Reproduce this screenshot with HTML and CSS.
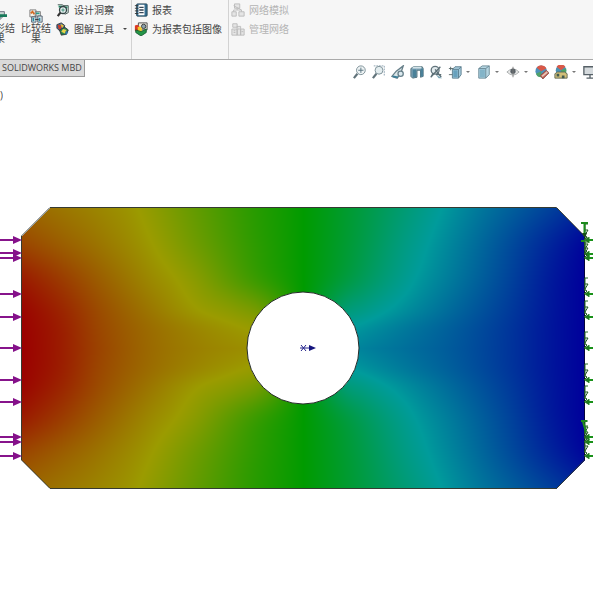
FILE: index.html
```html
<!DOCTYPE html>
<html lang="zh-CN">
<head>
<meta charset="utf-8">
<meta name="viewport" content="width=device-width, initial-scale=1">
<title>SOLIDWORKS Simulation</title>
<link rel="stylesheet" href="styles.css">
</head>
<body>
<header class="ribbon">
  <div class="group group-large">
    <button class="large" type="button">
      <svg class="icon" viewBox="0 0 16 16"><path d="M3 3h10v4l-5 5-5-5z" fill="#c8d6d2" stroke="#667"/><path d="M6 6h10v3H9l-2 3z" fill="#17795a"/></svg>
      <span>变形结果</span>
    </button>
    <button class="large" type="button">
      <svg class="icon" viewBox="0 0 16 16"><path d="M1 1h7v8H1zM7 3h6v5H7z" fill="#f2f0e8" stroke="#777"/><path d="M2 5l2-2 2 3" fill="none" stroke="#d56b24" stroke-width="2"/><path d="M8 5h4" stroke="#299b8c" stroke-width="2"/><path d="M3 9h5v6H3zM10 8h5v7h-5z" fill="#e6edf0" stroke="#456"/><path d="M5 10v4M12 10v4" stroke="#2a8ba2" stroke-width="2"/><path d="M7 12h4" stroke="#333"/></svg>
      <span>比较结果</span>
    </button>
  </div>
  <div class="group group-tools">
    <button class="command" type="button">
      <svg class="icon" viewBox="0 0 16 16"><path d="M2 2h5l2 1h5v8l-4 2" fill="#dbe9e5" stroke="#40534f"/><path d="M3 4h4M10 5h3" stroke="#238766" stroke-width="2"/><circle cx="8" cy="8" r="4" fill="#e6f1f1" stroke="#344" stroke-width="1.5"/><path d="M5 11l-3 4" stroke="#333" stroke-width="2.5"/><path d="M6 8h4M8 6v4" stroke="#388c73"/></svg>
      <span>设计洞察</span>
    </button>
    <button class="command has-menu" type="button">
      <svg class="icon" viewBox="0 0 16 16"><path d="M1 3l5-2 4 3-1 4-5 2-3-3z" fill="#376ca5" stroke="#333"/><path d="M2 3l4 1v5l-3-1z" fill="#cf3d28"/><path d="M5 2l4 2-2 3z" fill="#ecc12c"/><path d="M4 9l6-3 4 3-2 5-6 1z" fill="#278353" stroke="#333"/><path d="M8 8l4 1-2 4-4-2z" fill="#ead34a"/><path d="M11 10l3 2-3 3" fill="#3475b4"/></svg>
      <span>图解工具</span>
      <svg class="caret" viewBox="0 0 6 4"><path d="M1 1h4L3 3z" fill="#444"/></svg>
    </button>
  </div>
  <div class="group group-report">
    <button class="command" type="button">
      <svg class="icon" viewBox="0 0 16 16"><rect x="3" y="1" width="12" height="14" rx="1" fill="#356e91" stroke="#245"/><path d="M5 2h7v12H5z" fill="#fff"/><path d="M6 5h5M6 8h5M6 11h5" stroke="#345" stroke-width="1.5"/><path d="M1 3h4M1 6h4M1 9h4M1 12h4" stroke="#333"/></svg>
      <span>报表</span>
    </button>
    <button class="command" type="button">
      <svg class="icon" viewBox="0 0 16 16"><path d="M5 1h10v8H5z" fill="#ece9df" stroke="#444"/><circle cx="11" cy="5" r="2.5" fill="#8aa1ac" stroke="#333"/><path d="M1 4l3-1 2 2v6l-2 1-3-2z" fill="#db3924"/><path d="M4 6l3-1 2 2v4l-4 1z" fill="#f0cb28"/><path d="M2 9l6 2 6-3v4l-6 4-6-4z" fill="#239647" stroke="#175a32"/></svg>
      <span>为报表包括图像</span>
    </button>
  </div>
  <div class="group group-network">
    <button class="command" type="button" disabled>
      <svg class="icon" viewBox="0 0 16 16" fill="#e5e5e5" stroke="#b9b9b9"><path d="M4 1h6v5H4zM1 10h5v5H1zM9 10h6v5H9z"/><path d="M7 6v2M3 10V8h9v2M3 3l9 5" fill="none"/></svg>
      <span>网络模拟</span>
    </button>
    <button class="command" type="button" disabled>
      <svg class="icon" viewBox="0 0 16 16" fill="#e5e5e5" stroke="#b9b9b9"><path d="M2 2h5v4H2zM1 8h6v7H1zM7 5h4v10H7zM11 8h4v7h-4z"/><path d="M3 10h2M3 12h2M8 8h2M12 11h2"/></svg>
      <span>管理网络</span>
    </button>
  </div>
</header>

<div class="tabrow">
  <button class="tab" type="button">SOLIDWORKS MBD</button>
  <div class="viewbar">
    <button type="button" aria-label="整屏显示全图"><svg class="icon" viewBox="0 0 16 16"><circle cx="9" cy="6" r="5" fill="#eef3f4" stroke="#748890"/><path d="M9 3v6M6 6h6" stroke="#4f6c79"/><path d="M5 10l-4 5" stroke="#61737a" stroke-width="2.5"/></svg></button>
    <button type="button" aria-label="局部放大"><svg class="icon" viewBox="0 0 16 16"><path d="M2 1h12v12" fill="none" stroke="#859cab" stroke-dasharray="2 1"/><circle cx="8" cy="6" r="4.500" fill="#e4edef" stroke="#748890"/><path d="M5 10l-4 5" stroke="#61737a" stroke-width="2.5"/></svg></button>
    <button type="button" aria-label="上一视图"><svg class="icon" viewBox="0 0 16 16"><path d="M14 1L6 7l-5 6 6 2 4-5z" fill="#dbe6e8" stroke="#68808a" stroke-width="1.5"/><circle cx="11" cy="10" r="3" fill="#dceaf0" stroke="#68808a" stroke-width="1.5"/><path d="M2 13l6 1" stroke="#387f9a" stroke-width="2"/></svg></button>
    <button type="button" aria-label="剖面视图"><svg class="icon" viewBox="0 0 16 16"><path d="M1 4l3-2h10l1 2v9l-3 1V6H8v8l-5 1-2-2z" fill="#81a6b8" stroke="#4c6974"/><path d="M3 5h4v9H3zM12 4h3v9h-3z" fill="#4a8199"/><path d="M3 3h10" stroke="#d3e3e9" stroke-width="2"/></svg></button>
    <button type="button" aria-label="动态注解视图"><svg class="icon" viewBox="0 0 16 16"><circle cx="7" cy="6" r="4.500" fill="#e2eaed" stroke="#62747c" stroke-width="1.500"/><path d="M2 14L13 2M7 5l7 9M5 9l-3 5M8 11h6" fill="none" stroke="#5c6f76" stroke-width="1.5"/><path d="M8 11l3 4h4" fill="#75a1b3"/></svg></button>
    <button class="menu" type="button" aria-label="视图定向"><svg class="icon" viewBox="0 0 16 16"><path d="M5 5l3-3h7v9l-3 4H5z" fill="#a6cbdc" stroke="#56798a"/><path d="M5 5h7v10M12 5l3-3" fill="none" stroke="#56798a"/><path d="M6 6h5v8H6z" fill="#67a1bd"/><path d="M1 4h5M3 2v4M1 11h4" stroke="#566"/></svg><svg class="caret" viewBox="0 0 6 4"><path d="M1 1h4L3 3z" fill="#777"/></svg></button>
    <button class="menu" type="button" aria-label="显示样式"><svg class="icon" viewBox="0 0 16 16"><path d="M2 4l4-3h8v10l-4 4H2z" fill="#b5d5e1" stroke="#668692"/><path d="M2 4h8v11M10 4l4-3" fill="none" stroke="#668692"/><path d="M3 5h6v9H3z" fill="#83b4c8"/></svg><svg class="caret" viewBox="0 0 6 4"><path d="M1 1h4L3 3z" fill="#777"/></svg></button>
    <button class="menu" type="button" aria-label="隐藏或显示项目"><svg class="icon" viewBox="0 0 16 16"><path d="M1 8q7-7 14 0-7 7-14 0z" fill="#e7e8e8" stroke="#a5a9a9"/><circle cx="8" cy="7" r="3" fill="#596166"/><path d="M8 2v12" stroke="#777"/></svg><svg class="caret" viewBox="0 0 6 4"><path d="M1 1h4L3 3z" fill="#777"/></svg></button>
    <button type="button" aria-label="编辑外观"><svg class="icon" viewBox="0 0 16 16"><circle cx="7" cy="7" r="6.500" fill="#4c91ba"/><path d="M7 7L2 3a6.500 6.500 0 0 1 11 1z" fill="#d95848"/><path d="M7 7l-6 3a6.500 6.500 0 0 0 7 4z" fill="#4fa16b"/><path d="M6 12l7-6 3 3-7 7z" fill="#be6257" stroke="#8b514b"/><path d="M8 13l6-5" stroke="#e8c5b6" stroke-width="2"/></svg></button>
    <button class="menu" type="button" aria-label="应用布景"><svg class="icon" viewBox="0 0 16 16"><circle cx="8" cy="6" r="6" fill="#4b92b3"/><path d="M8 6L3 2a6 6 0 0 1 10 0z" fill="#d95949"/><path d="M8 6l6-2v6l-6 2z" fill="#4ba467"/><path d="M1 10l3-2h8l3 2v5H1z" fill="#d2bf78" stroke="#5b6655"/><path d="M3 10h3v3H3zM9 12h3v3H9z" fill="#435b4e"/></svg><svg class="caret" viewBox="0 0 6 4"><path d="M1 1h4L3 3z" fill="#777"/></svg></button>
    <button type="button" aria-label="视图设定"><svg class="icon" viewBox="0 0 16 16"><path d="M1 2h14v9H1z" fill="#d5dadd" stroke="#566067" stroke-width="1.5"/><path d="M8 11v4M4 15h8" stroke="#566067" stroke-width="1.5"/></svg></button>
  </div>
</div>

<main class="graphics">
  <p class="study"><span>(0)</span></p>
  <canvas class="layer" id="field" width="593" height="489"></canvas>
  <svg class="layer" viewBox="0 104 593 489" role="img" aria-label="带孔板位移云图">
    <defs>
      <g id="load"><path d="M0 0H14" stroke="#87148b" stroke-width="2"/><path d="M13-4L22 0 13 4z" fill="#85118a"/></g>
      <g id="fix">
        <path d="M585-16h3M585-16v13" stroke="#276b27" fill="none" stroke-width="1"/>
        <path d="M584-10h4l-3 5M584-5l3 2-3 3" stroke="#205820" fill="none" stroke-width="1"/>
        <path d="M586 0h7" stroke="#199119" stroke-width="2"/><path d="M589-3v6" stroke="#199119"/><path d="M584 0l5-3v6z" fill="#207920"/>
      </g>
    </defs>
    <path d="M50 207.500H556.500L584.500 236V460L556.500 488.500H50L21.500 460V236z" fill="none" stroke="#353a32"/>
    <path d="M584.500 236V460" stroke="#05053b"/>
    <circle cx="303" cy="348" r="56" fill="#fff" stroke="#252b28"/>
    <g>
      <use href="#load" y="240"/><use href="#load" y="253"/><use href="#load" y="258"/><use href="#load" y="294"/><use href="#load" y="317"/><use href="#load" y="348"/><use href="#load" y="380"/><use href="#load" y="402"/><use href="#load" y="437"/><use href="#load" y="442"/><use href="#load" y="456"/>
    </g>
    <g>
      <use href="#fix" y="240"/><use href="#fix" y="254"/><use href="#fix" y="258"/><use href="#fix" y="294"/><use href="#fix" y="317"/><use href="#fix" y="348"/><use href="#fix" y="380"/><use href="#fix" y="402"/><use href="#fix" y="437"/><use href="#fix" y="442"/><use href="#fix" y="456"/>
    </g>
    <path d="M581 223h7M584.500 223v13M581 241h4M581 421h6M583 422l3 10" stroke="#1d8a1d" stroke-width="2" fill="none"/>
    <path d="M582 233h5l-2 5z" fill="#174d17"/>
    <path d="M300 348h10M301 345l5 6M306 345l-5 6" stroke="#22228c"/>
    <path d="M309 345l7 3-7 3z" fill="#15157e"/>
  </svg>
</main>
<script src="field.js"></script>
</body>
</html>
```
FILE: styles.css
```css
* { box-sizing: border-box; }
body {
  margin: 0;
  min-height: 100vh;
  display: flex;
  flex-direction: column;
  overflow: hidden;
  background: #fff;
  color: #444;
  font: 10px/10px "Noto Sans CJK SC", sans-serif;
}
button {
  border: 0;
  padding: 0;
  background: none;
  color: inherit;
  font: inherit;
}
.icon { display: block; width: 14px; height: 14px; flex: none; }
.caret { display: block; width: 6px; height: 4px; flex: none; }

.ribbon {
  display: flex;
  height: 60px;
  background: #f6f6f6;
  border-bottom: 1px solid #aaa;
}
.group { flex: none; }
.group-large { display: flex; gap: 6px; margin-left: -15px; }
.large {
  width: 30px;
  padding-top: 9px;
  display: flex;
  flex-direction: column;
  align-items: center;
  align-self: flex-start;
}
.group-tools { padding-left: 5px; width: 80px; }
.group-report { padding-left: 2px; width: 97px; border-left: 1px solid #d2d2d2; }
.group-network { padding-left: 2px; border-left: 1px solid #d2d2d2; }
.command {
  display: flex;
  align-items: center;
  gap: 4px;
  height: 19px;
  white-space: nowrap;
}
.has-menu { width: 100%; }
.has-menu .caret { margin-left: auto; margin-right: 3px; }
.command:disabled { color: #b4b4b4; }

.tabrow {
  display: flex;
  justify-content: space-between;
  height: 23px;
}
.tab {
  height: 17px;
  padding: 0 2px;
  flex: none;
  background: #dadada;
  border: solid #999;
  border-width: 0 1px 1px 0;
  font: 9px/16px "Open Sans", sans-serif;
}
.viewbar {
  display: flex;
  align-items: center;
  gap: 5px;
  margin-right: -4px;
}
.viewbar button { display: flex; align-items: center; flex: none; }
.viewbar .menu { width: 24px; gap: 3px; }

.graphics {
  display: grid;
  grid-template-rows: 21px auto;
}
.study {
  margin: 0;
  width: 3px;
  overflow: hidden;
  display: flex;
  justify-content: flex-end;
  font: 10px/24px "Open Sans", sans-serif;
}
.layer { grid-area: 2 / 1; display: block; width: 100%; height: auto; }
```
FILE: field.js
```js
// Displacement contour of the plate. Levels: 0 red, 1 yellow, 2 green, 3 cyan, 4 blue.
const canvas = document.getElementById("field");
const ctx = canvas.getContext("2d");
const top0 = 104;
const centre = 348;

// Samples [x, level] along horizontal lines at a distance d from the centre line.
const rows = [
  { d: 0, s: [[22, 0], [60, .18], [100, .44], [150, .68], [200, .83], [247, .92], [260, .96], [345, 3.1], [360, 3.16], [400, 3.27], [450, 3.42], [500, 3.62], [550, 3.86], [584, 4]] },
  { d: 20, s: [[22, .01], [60, .19], [100, .46], [150, .7], [200, .88], [250, 1.02], [262, 1.08], [342, 2.96], [355, 3.02], [400, 3.2], [450, 3.39], [500, 3.61], [550, 3.86], [584, 4]] },
  { d: 40, s: [[22, .04], [60, .24], [100, .5], [150, .77], [197, 1], [235, 1.15], [264, 1.35], [303, 2], [342, 2.68], [365, 2.85], [390, 3], [450, 3.31], [500, 3.57], [550, 3.85], [584, 4]] },
  { d: 70, s: [[22, .18], [60, .38], [100, .61], [150, .88], [175, 1], [200, 1.16], [250, 1.58], [303, 2], [350, 2.45], [385, 2.77], [415, 3], [450, 3.21], [500, 3.51], [550, 3.83], [584, 4]] },
  { d: 105, s: [[22, .45], [60, .6], [100, .76], [152, 1], [200, 1.32], [250, 1.68], [303, 2], [350, 2.36], [400, 2.8], [428, 3], [450, 3.14], [500, 3.45], [550, 3.76], [584, 3.96]] },
  { d: 141, s: [[22, .66], [60, .76], [100, .87], [137, 1], [200, 1.4], [250, 1.72], [303, 2], [350, 2.33], [400, 2.71], [442, 3], [475, 3.2], [500, 3.33], [550, 3.58], [584, 3.76]] }
];

function spline(points, x) {
  let i = 0;
  while (i < points.length - 2 && x > points[i + 1][0]) i++;
  const slope = k => {
    const a = points[Math.max(0, k - 1)];
    const b = points[Math.min(points.length - 1, k + 1)];
    return (b[1] - a[1]) / (b[0] - a[0]);
  };
  const [x0, y0] = points[i];
  const [x1, y1] = points[i + 1];
  const h = x1 - x0;
  const t = (x - x0) / h;
  const t2 = t * t;
  const t3 = t2 * t;
  return (2 * t3 - 3 * t2 + 1) * y0 + (t3 - 2 * t2 + t) * h * slope(i)
    + (3 * t2 - 2 * t3) * y1 + (t3 - t2) * h * slope(i + 1);
}

const full = 155;
const stops = [[full, 0, 0], [full, full, 0], [0, full, 0], [0, full, full], [0, 0, full]];
const image = ctx.createImageData(canvas.width, canvas.height);

for (let x = 22; x < 585; x++) {
  const column = rows.map(row => [row.d, spline(row.s, x)]);
  for (let y = 208; y < 489; y++) {
    const d = Math.abs(y - centre);
    const edge = Math.min(x - 22, 584 - x);
    if (edge + 140 - d < 28) continue;
    const level = Math.max(0, Math.min(3.999, spline(column, d)));
    const k = Math.floor(level);
    const f = level - k;
    const p = ((y - top0) * canvas.width + x) * 4;
    for (let c = 0; c < 3; c++) {
      image.data[p + c] = stops[k][c] + (stops[k + 1][c] - stops[k][c]) * f;
    }
    image.data[p + 3] = 255;
  }
}
ctx.putImageData(image, 0, 0);
```
